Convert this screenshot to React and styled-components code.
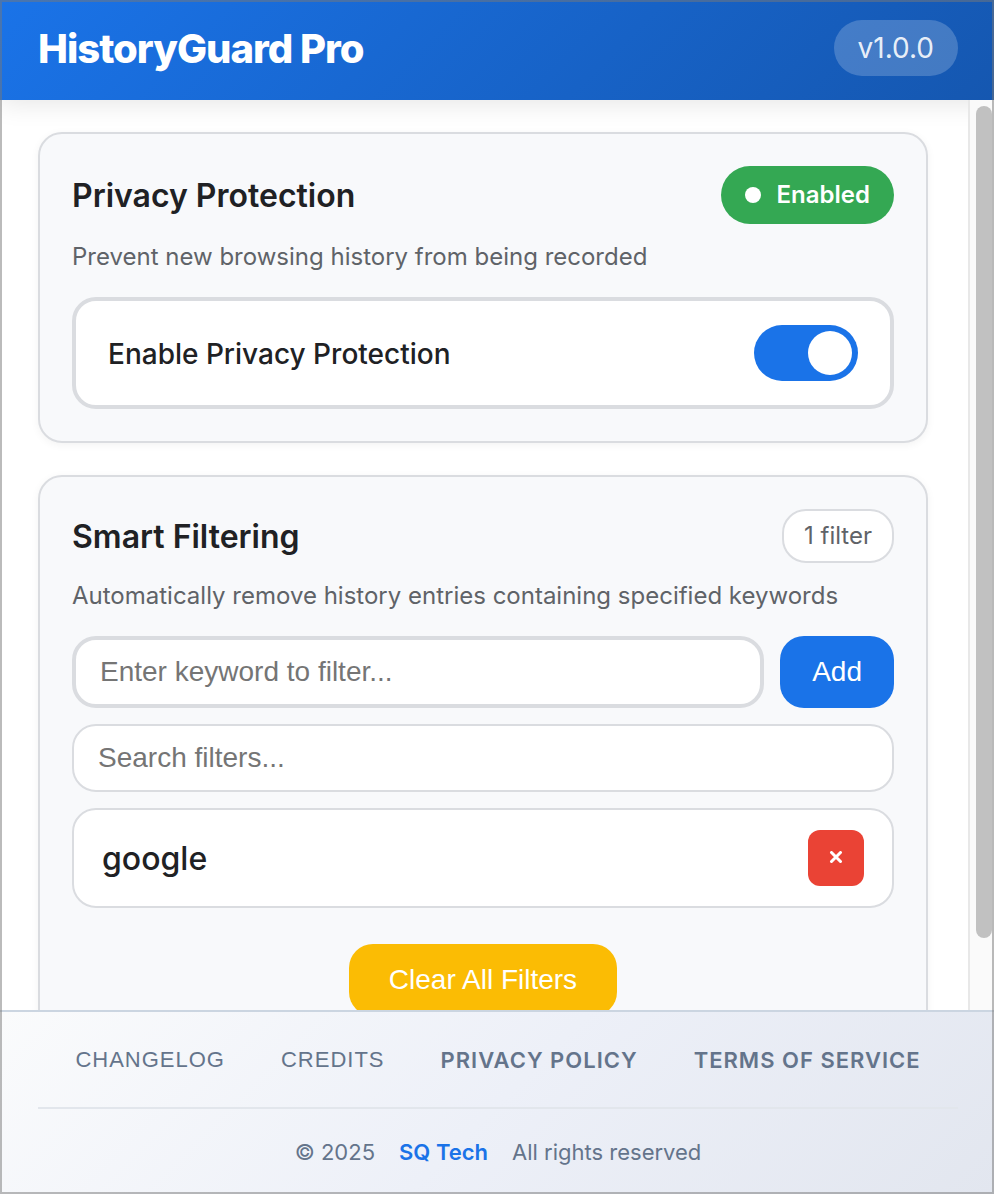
import React, { useState } from "react";
import styled, { createGlobalStyle } from "styled-components";

const sans = '"Inter", "Roboto", sans-serif';
const control = '"Liberation Sans", Arial, sans-serif';

const GlobalStyle = createGlobalStyle`
  *, *::before, *::after { box-sizing: border-box; }
  body {
    margin: 0;
    background: #fff;
    color: #202124;
    font-family: ${sans};
    -webkit-font-smoothing: antialiased;
  }
  button, input { font-family: ${control}; }
`;

const Popup = styled.div`
  display: flex;
  flex-direction: column;
  height: 100vh;

  &::after {
    content: "";
    position: fixed;
    inset: 0;
    border: 2px solid rgba(120, 120, 120, 0.5);
    pointer-events: none;
    z-index: 3;
  }
`;

const Header = styled.header`
  position: relative;
  z-index: 1;
  display: flex;
  align-items: center;
  justify-content: space-between;
  padding: 20px 36px 22px 38px;
  background: linear-gradient(135deg, #1a73e8 0%, #1557b0 100%);
  box-shadow: 0 4px 24px rgba(0, 0, 0, 0.1);
  color: #fff;
`;

const AppTitle = styled.h1`
  margin: 0;
  font-size: 40px;
  line-height: 58px;
  font-weight: 800;
  letter-spacing: -1px;
`;

const Version = styled.span`
  align-self: flex-start;
  padding: 0 24px;
  border-radius: 28px;
  background: rgba(255, 255, 255, 0.2);
  color: rgba(255, 255, 255, 0.9);
  font-size: 28px;
  line-height: 56px;
`;

const Body = styled.div`
  display: flex;
  flex: 1;
  min-height: 0;
`;

const Content = styled.main`
  display: flex;
  flex: 1;
  flex-direction: column;
  gap: 32px;
  min-width: 0;
  padding: 32px 40px 32px 38px;
  overflow-y: auto;
  scrollbar-width: none;
`;

const ScrollTrack = styled.div`
  position: relative;
  z-index: 2;
  width: 26px;
  padding: 6px 2px 0 6px;
  border-left: 2px solid #e8e8e8;
  background: #fafafa;
`;

const ScrollThumb = styled.div`
  height: 92%;
  border-radius: 8px;
  background: #c1c1c1;
`;

const Card = styled.section`
  flex: none;
  padding: 32px;
  border: 2px solid #dadce0;
  border-radius: 24px;
  background: #f8f9fb;
  box-shadow: 0 2px 8px rgba(0, 0, 0, 0.05);
`;

const CardHead = styled.div`
  display: flex;
  align-items: center;
  justify-content: space-between;
`;

const CardTitle = styled.h2`
  margin: 0;
  padding-top: 2px;
  font-size: 32px;
  line-height: 40px;
  font-weight: 600;
`;

const Description = styled.p`
  margin: 16px 0 24px;
  color: #5f6368;
  font-size: 24px;
  line-height: 33px;
`;

const Status = styled.span`
  display: flex;
  align-items: center;
  gap: 16px;
  padding: 0 24px;
  border-radius: 29px;
  background: #34a853;
  color: #fff;
  font-size: 24px;
  line-height: 58px;
  font-weight: 600;

  &::before {
    content: "";
    width: 16px;
    height: 16px;
    border-radius: 50%;
    background: #fff;
  }
`;

const Count = styled.span`
  padding: 0 20px;
  border: 2px solid #dadce0;
  border-radius: 24px;
  background: #fff;
  color: #5f6368;
  font-size: 24px;
  line-height: 50px;
`;

const ToggleRow = styled.div`
  display: flex;
  align-items: center;
  justify-content: space-between;
  padding: 24px 32px;
  border: 4px solid #dadce0;
  border-radius: 24px;
  background: #fff;
`;

const ToggleLabel = styled.label`
  padding-top: 2px;
  font-size: 28px;
  font-weight: 500;
`;

const Switch = styled.input`
  display: flex;
  flex: none;
  appearance: none;
  width: 104px;
  height: 56px;
  margin: 0;
  padding: 6px;
  border-radius: 28px;
  background: #dadce0;
  cursor: pointer;

  &::before {
    content: "";
    width: 44px;
    height: 44px;
    border-radius: 50%;
    background: #fff;
  }

  &:checked {
    justify-content: flex-end;
    background: #1a73e8;
  }
`;

const Stack = styled.div`
  display: flex;
  flex-direction: column;
  gap: 16px;
`;

const AddForm = styled.form`
  display: flex;
  gap: 16px;
`;

const TextField = styled.input`
  flex: ${(p) => (p.$strong ? "1" : "none")};
  min-width: 0;
  height: ${(p) => (p.$strong ? "72px" : "68px")};
  padding: 0 24px;
  border: ${(p) => (p.$strong ? "4px" : "2px")} solid #dadce0;
  border-radius: 24px;
  background: #fff;
  color: #202124;
  font-size: 28px;

  &::placeholder { color: #757575; }
`;

const Button = styled.button`
  height: 72px;
  padding: 0 ${(p) => (p.$warning ? "40px" : "32px")};
  border: 0;
  border-radius: 24px;
  background: ${(p) => (p.$warning ? "#fbbc04" : "#1a73e8")};
  color: #fff;
  font-size: 28px;
  font-weight: 500;
  cursor: pointer;
`;

const FilterList = styled.ul`
  margin: 0;
  padding: 0;
  list-style: none;
`;

const FilterItem = styled.li`
  display: flex;
  align-items: center;
  justify-content: space-between;
  padding: 20px 28px;
  border: 2px solid #dadce0;
  border-radius: 24px;
  background: #fff;
  font-size: 32px;
  font-weight: 500;
`;

const RemoveButton = styled.button`
  display: grid;
  place-items: center;
  width: 56px;
  height: 56px;
  padding: 0;
  border: 0;
  border-radius: 12px;
  background: #ea4335;
  color: #fff;
  cursor: pointer;
`;

const Actions = styled.div`
  display: flex;
  justify-content: center;
  margin-top: 36px;
`;

const Footer = styled.footer`
  position: relative;
  z-index: 2;
  padding: 0 36px 0 38px;
  border-top: 2px solid #cbd5e1;
  background: linear-gradient(135deg, #fafbfc 0%, #edf0f8 50%, #e2e6ef 100%);
  color: #64748b;
  font-size: 22px;
`;

const FooterNav = styled.nav`
  display: flex;
  align-items: center;
  justify-content: center;
  gap: 56px;
  height: 97px;
  border-bottom: 2px solid #e2e6ec;
`;

const navItem = `
  padding: 0;
  color: #64748b;
  font-size: 22px;
  line-height: 32px;
  letter-spacing: 1px;
  text-transform: uppercase;
  white-space: nowrap;
`;

const NavButton = styled.button`
  ${navItem}
  border: 0;
  background: none;
  cursor: pointer;
`;

const NavLink = styled.a`
  ${navItem}
  font-weight: 600;
  text-decoration: none;
`;

const Copyright = styled.div`
  display: flex;
  align-items: center;
  justify-content: center;
  gap: 24px;
  height: 85px;
`;

const CompanyLink = styled.a`
  color: #1a73e8;
  font-weight: 600;
  text-decoration: none;
`;

export default function App() {
  const [enabled, setEnabled] = useState(true);

  return (
    <Popup>
      <GlobalStyle />
      <Header>
        <AppTitle>HistoryGuard Pro</AppTitle>
        <Version>v1.0.0</Version>
      </Header>
      <Body>
        <Content>
          <Card>
            <CardHead>
              <CardTitle>Privacy Protection</CardTitle>
              <Status>{enabled ? "Enabled" : "Disabled"}</Status>
            </CardHead>
            <Description>Prevent new browsing history from being recorded</Description>
            <ToggleRow>
              <ToggleLabel htmlFor="protection">Enable Privacy Protection</ToggleLabel>
              <Switch
                id="protection"
                type="checkbox"
                checked={enabled}
                onChange={(e) => setEnabled(e.target.checked)}
              />
            </ToggleRow>
          </Card>
          <Card>
            <CardHead>
              <CardTitle>Smart Filtering</CardTitle>
              <Count>1 filter</Count>
            </CardHead>
            <Description>
              Automatically remove history entries containing specified keywords
            </Description>
            <Stack>
              <AddForm onSubmit={(e) => e.preventDefault()}>
                <TextField $strong aria-label="Keyword" placeholder="Enter keyword to filter..." />
                <Button type="submit">Add</Button>
              </AddForm>
              <TextField aria-label="Search filters" placeholder="Search filters..." />
              <FilterList>
                <FilterItem>
                  google
                  <RemoveButton type="button" aria-label="Remove google">
                    <svg width="14" height="14" viewBox="0 0 14 14" fill="none" stroke="currentColor" strokeWidth="3" strokeLinecap="round">
                      <path d="M2.5 1.5 11.5 10.5M11.5 1.5 2.5 10.5" />
                    </svg>
                  </RemoveButton>
                </FilterItem>
              </FilterList>
            </Stack>
            <Actions>
              <Button type="button" $warning>Clear All Filters</Button>
            </Actions>
          </Card>
        </Content>
        <ScrollTrack>
          <ScrollThumb />
        </ScrollTrack>
      </Body>
      <Footer>
        <FooterNav>
          <NavButton type="button">Changelog</NavButton>
          <NavButton type="button">Credits</NavButton>
          <NavLink href="#privacy">Privacy Policy</NavLink>
          <NavLink href="#terms">Terms of Service</NavLink>
        </FooterNav>
        <Copyright>
          <span>© 2025</span>
          <CompanyLink href="#company">SQ Tech</CompanyLink>
          <span>All rights reserved</span>
        </Copyright>
      </Footer>
    </Popup>
  );
}
